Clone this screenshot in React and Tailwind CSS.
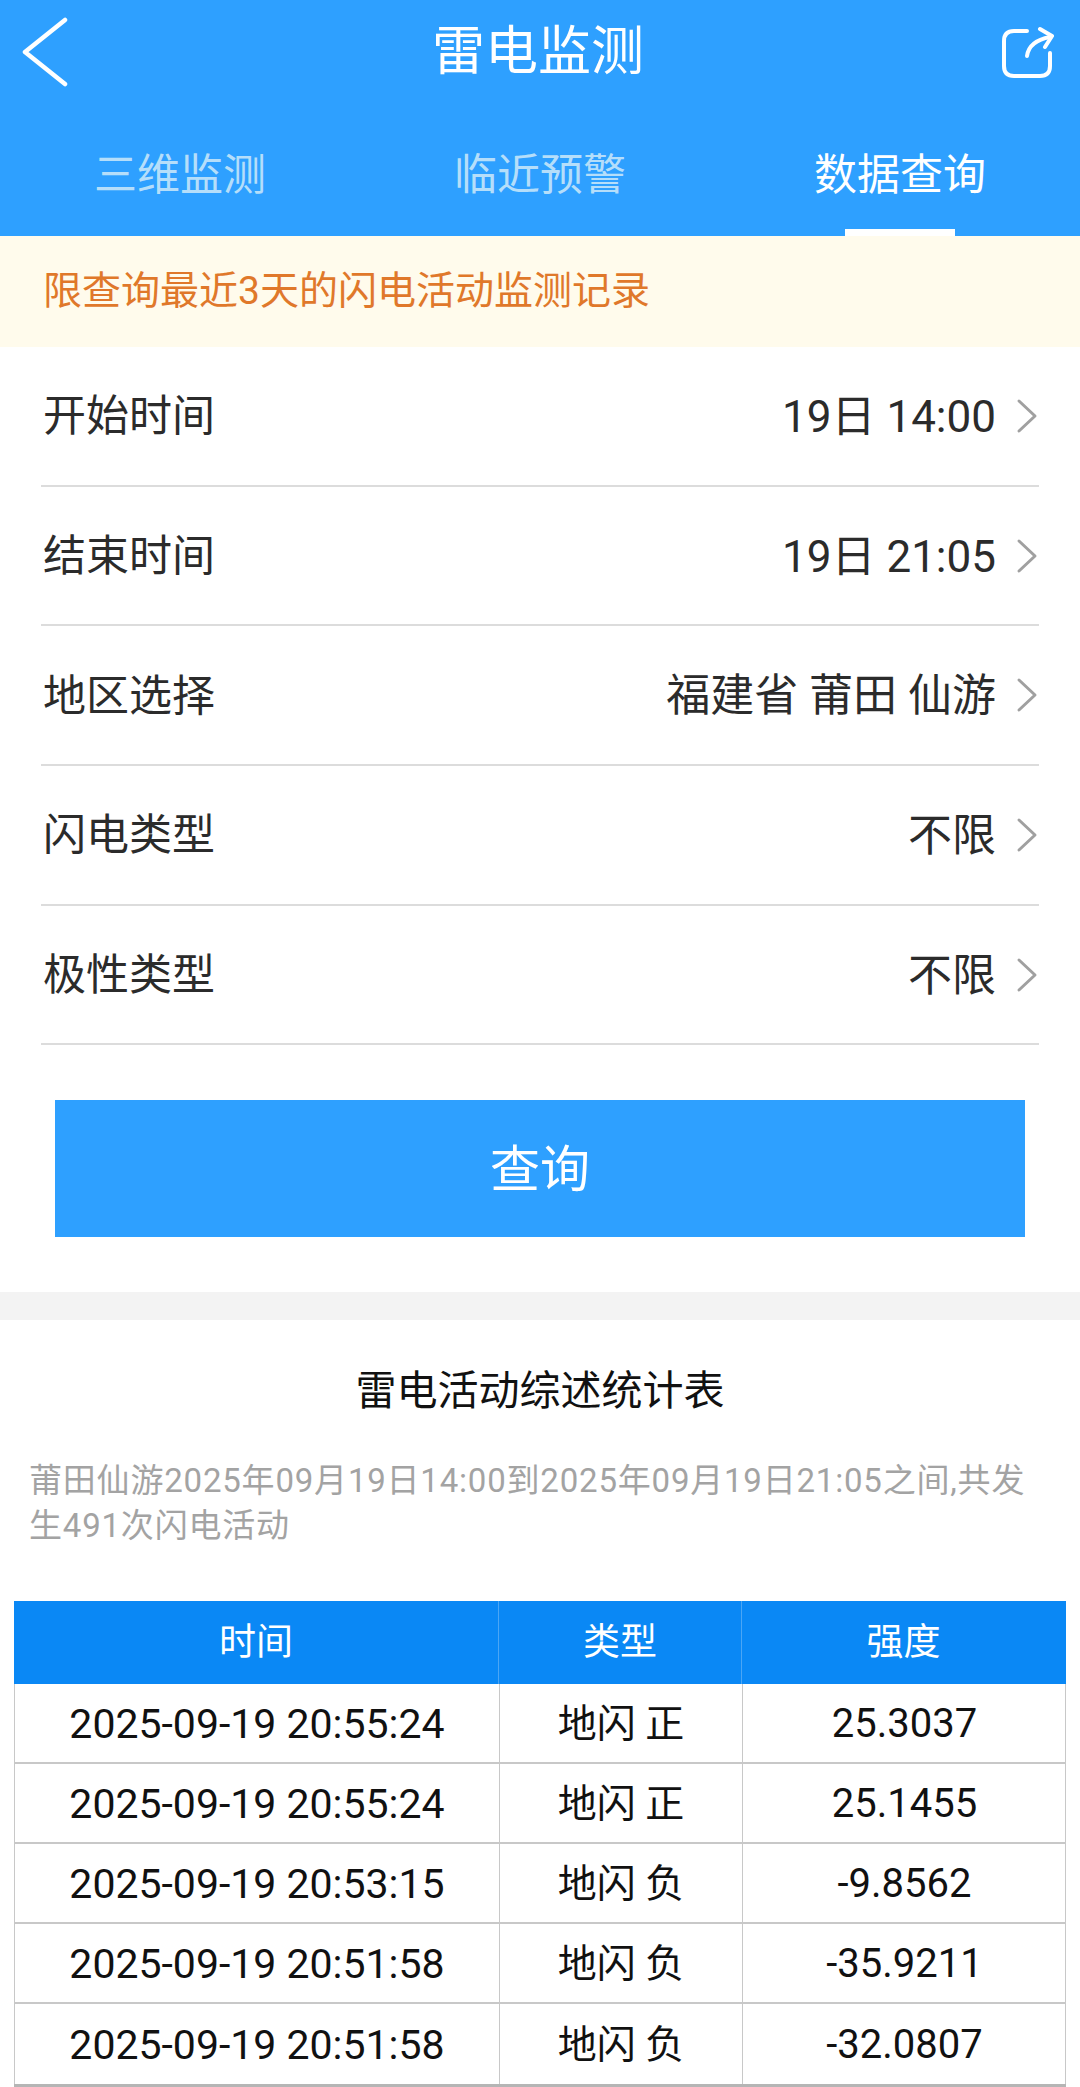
import React from "react";

const filters = [
  { label: "开始时间", value: "19日 14:00" },
  { label: "结束时间", value: "19日 21:05" },
  { label: "地区选择", value: "福建省 莆田 仙游" },
  { label: "闪电类型", value: "不限" },
  { label: "极性类型", value: "不限" },
];

const records = [
  { time: "2025-09-19 20:55:24", type: "地闪 正", value: "25.3037" },
  { time: "2025-09-19 20:55:24", type: "地闪 正", value: "25.1455" },
  { time: "2025-09-19 20:53:15", type: "地闪 负", value: "-9.8562" },
  { time: "2025-09-19 20:51:58", type: "地闪 负", value: "-35.9211" },
  { time: "2025-09-19 20:51:58", type: "地闪 负", value: "-32.0807" },
];

const tabs = ["三维监测", "临近预警", "数据查询"];

const App = () => {
  return (
    <div className="w-[1080px] h-[2087px] overflow-hidden bg-white font-['Roboto','Noto_Sans_CJK_SC',sans-serif] text-[#222]">
      <div className="bg-[#2ea0ff] h-[236px] flex flex-col">
        <div className="h-[104px] flex items-center justify-between pl-[22px] pr-[26px]">
          <div className="w-[52px]">
            <svg width="46" height="70" viewBox="0 0 46 70" fill="none" stroke="#fff" strokeWidth="4.5" strokeLinecap="round" strokeLinejoin="round">
              <path d="M43 3 L3 35 L43 67" />
            </svg>
          </div>
          <div className="text-[53px] leading-none text-white">雷电监测</div>
          <svg width="52" height="52" viewBox="0 0 52 52" fill="none" stroke="#fff" strokeWidth="4" strokeLinecap="round" strokeLinejoin="round">
            <path d="M25 5 H12 Q2 5 2 15 V40 Q2 50 12 50 H38 Q48 50 48 40 V27" />
            <path d="M25 30 Q27 15 48 11" />
            <path d="M38 3 L50 10 L43 21" />
          </svg>
        </div>
        <div className="flex-1 grid grid-cols-3">
          {tabs.map((tab, i) => (
            <div key={tab} className="relative flex items-center justify-center pt-[10px]">
              <span className={"text-[43px] leading-none " + (i === 2 ? "text-white" : "text-[#b5defa]")}>{tab}</span>
              {i === 2 && <div className="absolute bottom-0 left-[125px] w-[110px] h-[7px] bg-white" />}
            </div>
          ))}
        </div>
      </div>

      <div className="h-[111px] bg-[#fffbec] flex items-center pl-[43px] text-[39px] leading-none text-[#e0782a]">
        限查询最近3天的闪电活动监测记录
      </div>

      <div className="px-[41px]">
        {filters.map((row) => (
          <div key={row.label} className="h-[139.7px] flex items-center justify-between border-b-2 border-[#dcdcdc]">
            <span className="text-[43px] leading-none text-[#2b2b2b] pl-[2px] pt-[2px]">{row.label}</span>
            <div className="flex items-center">
              <span className="text-[44px] leading-none text-[#2b2b2b] pt-[2px]">{row.value}</span>
              <svg className="ml-[20px] mr-[1px]" width="22" height="36" viewBox="0 0 22 36" fill="none" stroke="#a0a0a0" strokeWidth="3" strokeLinecap="round" strokeLinejoin="round">
                <path d="M3 3 L19 18 L3 33" />
              </svg>
            </div>
          </div>
        ))}
      </div>

      <div className="px-[55px] pt-[55px] pb-[55px]">
        <div className="h-[137px] bg-[#2ea0ff] flex items-center justify-center pt-[2px] text-[50px] leading-none text-white">查询</div>
      </div>

      <div className="h-[28px] bg-[#f3f3f3]" />

      <div className="pt-[49px] text-center text-[41px] leading-[44px] text-[#111]">雷电活动综述统计表</div>

      <p className="mt-[45px] px-[29px] text-[33px] tracking-[0.8px] leading-[45px] text-[#a3a3a3] break-all">
        莆田仙游2025年09月19日14:00到2025年09月19日21:05之间,共发生491次闪电活动
      </p>

      <div className="mt-[53px] mx-[14px] border-b-[3px] border-[#b5b5b5]">
        <div className="grid grid-cols-[485px_243px_323px] h-[83px] bg-[#0a88f5] text-[37px] text-white">
          <div className="flex items-center justify-center border-r border-[#4ba6f5]">时间</div>
          <div className="flex items-center justify-center border-r border-[#4ba6f5]">类型</div>
          <div className="flex items-center justify-center">强度</div>
        </div>
        {records.map((r, i) => (
          <div key={i} className={"grid grid-cols-[485px_243px_323px] h-[80px] border-x border-[#c8c8c8] text-[40px] text-[#111] " + (i < records.length - 1 ? "border-b-2" : "")}>
            <div className="flex items-center justify-center border-r border-[#c8c8c8] text-[41px] pt-[2px]">{r.time}</div>
            <div className="flex items-center justify-center border-r border-[#c8c8c8] text-[39px] pt-[2px]">{r.type}</div>
            <div className="flex items-center justify-center pt-[2px]">{r.value}</div>
          </div>
        ))}
      </div>
    </div>
  );
};

export default App;
